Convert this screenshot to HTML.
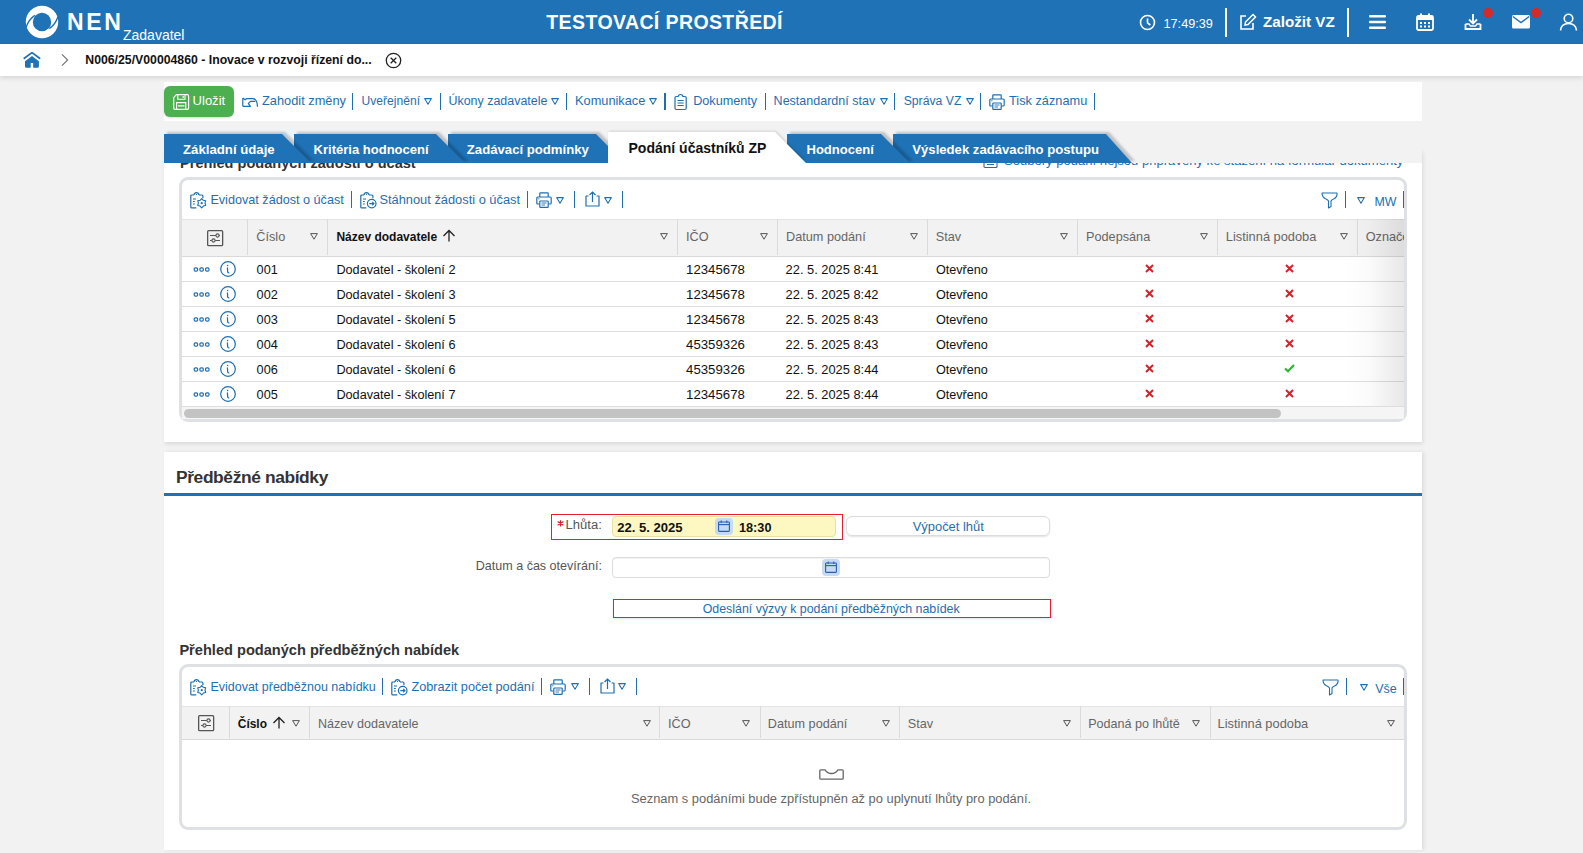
<!DOCTYPE html><html><head><meta charset="utf-8"><style>
html,body{margin:0;padding:0}
body{width:1583px;height:853px;overflow:hidden;position:relative;background:#f2f2f2;font-family:"Liberation Sans",sans-serif}
.t{position:absolute;line-height:1;white-space:nowrap}
svg{overflow:visible}
</style></head><body>
<div style="position:absolute;left:0px;top:0px;width:1583px;height:44px;background:#1f72b5"></div>
<svg style="position:absolute;left:25px;top:5px;" width="34" height="34" viewBox="0 0 34 34"><circle cx="17" cy="17" r="16.2" fill="#fff"/><circle cx="17" cy="17" r="9.2" fill="#1f72b5"/>
<path d="M9.8 10.3 Q3.5 14.5 1 22.5" stroke="#1f72b5" stroke-width="1.4" fill="none"/>
<path d="M24.2 23.7 Q30.5 19.5 33 11.5" stroke="#1f72b5" stroke-width="1.4" fill="none"/></svg>
<div class="t" style="left:67px;top:11.00px;font-size:23px;font-weight:700;color:#fff;letter-spacing:2.6px">NEN</div>
<div class="t" style="left:123px;top:28.00px;font-size:14px;font-weight:400;color:#fff;">Zadavatel</div>
<div class="t" style="left:546.3px;top:13.00px;font-size:19.5px;font-weight:700;color:#fff;letter-spacing:0.4px">TESTOVACÍ PROSTŘEDÍ</div>
<svg style="position:absolute;left:1139px;top:14px;" width="17" height="17" viewBox="0 0 17 17"><circle cx="8.5" cy="8.5" r="7" fill="none" stroke="#fff" stroke-width="1.6"/><path d="M8.5 4.5 V8.8 L11.3 11" fill="none" stroke="#fff" stroke-width="1.6"/></svg>
<div class="t" style="left:1163.5px;top:18.00px;font-size:12.7px;font-weight:400;color:#fff;">17:49:39</div>
<div style="position:absolute;left:1225.3px;top:8px;width:2.2px;height:29px;background:#fff"></div>
<svg style="position:absolute;left:1238px;top:13px;" width="19" height="18" viewBox="0 0 19 18"><path d="M8 3 H3 V16 H15 V10" fill="none" stroke="#fff" stroke-width="1.6"/><path d="M7 12 L7.5 9 L15 1.5 L17.5 4 L10 11.5 Z" fill="none" stroke="#fff" stroke-width="1.5"/></svg>
<div class="t" style="left:1263px;top:14.00px;font-size:15.2px;font-weight:700;color:#fff;">Založit VZ</div>
<div style="position:absolute;left:1346.8px;top:8px;width:2.2px;height:29px;background:#fff"></div>
<svg style="position:absolute;left:1369px;top:14px;" width="17" height="16" viewBox="0 0 17 16"><rect x="0" y="1" width="17" height="2.6" rx="1" fill="#fff"/><rect x="0" y="6.7" width="17" height="2.6" rx="1" fill="#fff"/><rect x="0" y="12.4" width="17" height="2.6" rx="1" fill="#fff"/></svg>
<svg style="position:absolute;left:1416px;top:13px;" width="18" height="18" viewBox="0 0 18 18"><rect x="1" y="3" width="16" height="14" rx="1.5" fill="none" stroke="#fff" stroke-width="1.8"/><rect x="1" y="3" width="16" height="4" fill="#fff"/><rect x="4" y="0.5" width="2" height="4" fill="#fff"/><rect x="12" y="0.5" width="2" height="4" fill="#fff"/><g fill="#fff"><rect x="4" y="9" width="2" height="2"/><rect x="8" y="9" width="2" height="2"/><rect x="12" y="9" width="2" height="2"/><rect x="4" y="12.5" width="2" height="2"/><rect x="8" y="12.5" width="2" height="2"/><rect x="12" y="12.5" width="2" height="2"/></g></svg>
<svg style="position:absolute;left:1464px;top:13px;" width="18" height="18" viewBox="0 0 18 18"><path d="M9 1 V10 M5 6.5 L9 10.5 L13 6.5" fill="none" stroke="#fff" stroke-width="1.8"/><path d="M1.5 11 V16 H16.5 V11" fill="none" stroke="#fff" stroke-width="1.8"/><path d="M1.5 11 H5 L6.5 13 H11.5 L13 11 H16.5" fill="none" stroke="#fff" stroke-width="1.4"/></svg>
<div style="position:absolute;left:1482.5px;top:7.8px;width:10px;height:10px;border-radius:50%;background:#d32a2a"></div>
<svg style="position:absolute;left:1512px;top:15px;" width="18" height="14" viewBox="0 0 18 14"><rect x="0" y="0" width="18" height="13.5" rx="1.5" fill="#fff"/><path d="M0.8 1.5 L9 7.5 L17.2 1.5" fill="none" stroke="#1f72b5" stroke-width="1.5"/></svg>
<div style="position:absolute;left:1530.8px;top:7.8px;width:10px;height:10px;border-radius:50%;background:#d32a2a"></div>
<svg style="position:absolute;left:1559px;top:13px;" width="19" height="18" viewBox="0 0 19 18"><circle cx="9.5" cy="5.5" r="4.3" fill="none" stroke="#fff" stroke-width="1.6"/><path d="M1.5 17.5 C2 12 5 10.5 9.5 10.5 C14 10.5 17 12 17.5 17.5" fill="none" stroke="#fff" stroke-width="1.6"/></svg>
<div style="position:absolute;left:0px;top:44px;width:1583px;height:32px;background:#fff;box-shadow:0 2px 5px rgba(0,0,0,0.12)"></div>
<svg style="position:absolute;left:23px;top:51px;" width="18" height="18" viewBox="0 0 18 18"><path d="M1.3 7.3 L9 1.6 L16.6 7.3" fill="none" stroke="#1f72b5" stroke-width="1.8" stroke-linejoin="round" stroke-linecap="round"/><path d="M2 10.2 L9 5.1 L15.9 10.2 V15.4 Q15.9 16.8 14.5 16.8 H10.2 V12 H7.7 V16.8 H3.4 Q2 16.8 2 15.4 Z" fill="#1f72b5"/></svg>
<svg style="position:absolute;left:60px;top:53px;" width="9" height="14" viewBox="0 0 9 14"><path d="M2 1.3 L7.6 7 L2 12.7" fill="none" stroke="#777" stroke-width="1.2"/></svg>
<div class="t" style="left:85.3px;top:54.00px;font-size:12.285368155441178px;font-weight:700;color:#111;">N006/25/V00004860 - Inovace v rozvoji řízení do...</div>
<svg style="position:absolute;left:385px;top:52px;" width="17" height="17" viewBox="0 0 17 17"><circle cx="8.5" cy="8.5" r="7.2" fill="none" stroke="#222" stroke-width="1.3"/><path d="M5.7 5.7 L11.3 11.3 M11.3 5.7 L5.7 11.3" stroke="#222" stroke-width="1.3"/></svg>
<div style="position:absolute;left:164px;top:82px;width:1258px;height:39px;background:#fff;box-shadow:0 1px 0 #e2e2e2"></div>
<div style="position:absolute;left:164px;top:86px;width:70px;height:31px;background:#4caf50;border-radius:6px;box-shadow:0 1px 2px rgba(0,0,0,0.15)"></div>
<svg style="position:absolute;left:172.5px;top:94px;" width="17" height="16" viewBox="0 0 17 16"><path d="M3.3 0.7 H14.3 Q15.6 0.7 15.6 2 V14 Q15.6 15.3 14.3 15.3 H2 Q0.7 15.3 0.7 14 V3.6 Z" fill="none" stroke="#fff" stroke-width="1.2" stroke-linejoin="round"/><path d="M4.8 0.9 V5.2 H12 V0.9" fill="none" stroke="#fff" stroke-width="1.1"/><rect x="9.6" y="2" width="1.2" height="1.9" fill="#fff"/><path d="M3.6 15.2 V8.6 H12.8 V15.2 M5 11.9 H11.4" fill="none" stroke="#fff" stroke-width="1.1"/></svg>
<div class="t" style="left:192.6px;top:94.00px;font-size:13.036740814796302px;font-weight:400;color:#fff;">Uložit</div>
<svg style="position:absolute;left:241px;top:96px;" width="18" height="12" viewBox="0 0 18 12"><path d="M1.8 10.3 V2.8 Q1.8 2.2 2.4 2.3 L3.6 3.4 Q4.5 3.9 5.4 2.6 H11.5 C14.6 2.5 16.5 5.6 16.5 10.7" fill="none" stroke="#1f6eb0" stroke-width="1.2" stroke-linejoin="round"/><path d="M1.8 10.3 H9.4 L7.3 7.4 L9.8 5.3 H14.3" fill="none" stroke="#1f6eb0" stroke-width="1.2" stroke-linejoin="round"/></svg>
<div class="t" style="left:262px;top:95.00px;font-size:12.80762358546754px;font-weight:400;color:#1f6eb0;">Zahodit změny</div>
<div style="position:absolute;left:352px;top:93px;width:1.25px;height:17px;background:#1f6eb0"></div>
<div class="t" style="left:361.6px;top:95.00px;font-size:12.096930533117932px;font-weight:400;color:#1f6eb0;">Uveřejnění</div>
<svg style="position:absolute;left:424.3px;top:97.6px;" width="8" height="7" viewBox="0 0 8 7"><path d="M0.6 0.6 H7.4 L4 6.2 Z" fill="none" stroke="#1f6eb0" stroke-width="1.05" stroke-linejoin="round"/></svg>
<div style="position:absolute;left:439.5px;top:93px;width:1.25px;height:17px;background:#1f6eb0"></div>
<div class="t" style="left:448.5px;top:95.00px;font-size:12.454054054054055px;font-weight:400;color:#1f6eb0;">Úkony zadavatele</div>
<svg style="position:absolute;left:551px;top:97.6px;" width="8" height="7" viewBox="0 0 8 7"><path d="M0.6 0.6 H7.4 L4 6.2 Z" fill="none" stroke="#1f6eb0" stroke-width="1.05" stroke-linejoin="round"/></svg>
<div style="position:absolute;left:565.8px;top:93px;width:1.25px;height:17px;background:#1f6eb0"></div>
<div class="t" style="left:575px;top:95.00px;font-size:12.793094636417845px;font-weight:400;color:#1f6eb0;">Komunikace</div>
<svg style="position:absolute;left:649.1px;top:97.6px;" width="8" height="7" viewBox="0 0 8 7"><path d="M0.6 0.6 H7.4 L4 6.2 Z" fill="none" stroke="#1f6eb0" stroke-width="1.05" stroke-linejoin="round"/></svg>
<div style="position:absolute;left:664.3px;top:93px;width:1.25px;height:17px;background:#1f6eb0"></div>
<svg style="position:absolute;left:674px;top:94px;" width="13" height="16" viewBox="0 0 13 16"><path d="M4 2.5 H2.2 Q1 2.5 1 3.7 V14.3 Q1 15.5 2.2 15.5 H11 Q12.2 15.5 12.2 14.3 V3.7 Q12.2 2.5 11 2.5 H9 Q8.5 0.5 6.6 0.5 Q4.7 0.5 4 2.5 Z" fill="none" stroke="#1f6eb0" stroke-width="1.2"/><path d="M3.5 6.5 H9.7 M3.5 9 H9.7 M3.5 11.5 H9.7" stroke="#1f6eb0" stroke-width="1.1"/></svg>
<div class="t" style="left:693.2px;top:95.00px;font-size:12.654082609904538px;font-weight:400;color:#1f6eb0;">Dokumenty</div>
<div style="position:absolute;left:764.5px;top:93px;width:1.25px;height:17px;background:#1f6eb0"></div>
<div class="t" style="left:773.6px;top:95.00px;font-size:12.531141102404652px;font-weight:400;color:#1f6eb0;">Nestandardní stav</div>
<svg style="position:absolute;left:879.8px;top:97.6px;" width="8" height="7" viewBox="0 0 8 7"><path d="M0.6 0.6 H7.4 L4 6.2 Z" fill="none" stroke="#1f6eb0" stroke-width="1.05" stroke-linejoin="round"/></svg>
<div style="position:absolute;left:893.9px;top:93px;width:1.25px;height:17px;background:#1f6eb0"></div>
<div class="t" style="left:903.7px;top:95.00px;font-size:12.213659665950058px;font-weight:400;color:#1f6eb0;">Správa VZ</div>
<svg style="position:absolute;left:965.5px;top:97.6px;" width="8" height="7" viewBox="0 0 8 7"><path d="M0.6 0.6 H7.4 L4 6.2 Z" fill="none" stroke="#1f6eb0" stroke-width="1.05" stroke-linejoin="round"/></svg>
<div style="position:absolute;left:979.8px;top:93px;width:1.25px;height:17px;background:#1f6eb0"></div>
<svg style="position:absolute;left:989px;top:94px;" width="16" height="16" viewBox="0 0 16 16"><path d="M3.8 5 V1.5 Q3.8 0.8 4.5 0.8 H11.5 Q12.2 0.8 12.2 1.5 V5" fill="none" stroke="#1f6eb0" stroke-width="1.2"/><path d="M3.5 12 H1.8 Q0.8 12 0.8 11 V6 Q0.8 5 1.8 5 H14.2 Q15.2 5 15.2 6 V11 Q15.2 12 14.2 12 H12.5" fill="none" stroke="#1f6eb0" stroke-width="1.2"/><rect x="3.8" y="9" width="8.4" height="6.3" rx="0.6" fill="none" stroke="#1f6eb0" stroke-width="1.2"/><path d="M5.5 11 H10.5 M5.5 13 H9" stroke="#1f6eb0" stroke-width="0.9"/><path d="M2.2 6.8 H3.5" stroke="#1f6eb0" stroke-width="0.9"/></svg>
<div class="t" style="left:1009px;top:95.00px;font-size:12.770316760531077px;font-weight:400;color:#1f6eb0;">Tisk záznamu</div>
<div style="position:absolute;left:1094px;top:93px;width:1.25px;height:17px;background:#1f6eb0"></div>
<div style="position:absolute;left:164px;top:150px;width:1258px;height:292px;background:#fff;box-shadow:1px 2px 4px rgba(0,0,0,0.10)"></div>
<div class="t" style="left:180px;top:156.00px;font-size:14.594928880643167px;font-weight:700;color:#333;">Přehled podaných žádostí o účast</div>
<svg style="position:absolute;left:983px;top:156px;" width="15" height="12" viewBox="0 0 15 12"><rect x="1" y="1" width="13" height="10.5" rx="1" fill="none" stroke="#1f6eb0" stroke-width="1.1"/><path d="M4 8.5 H11" stroke="#1f6eb0" stroke-width="1"/></svg>
<div class="t" style="left:1004px;top:154.00px;font-size:13.070235959707466px;font-weight:400;color:#1f6eb0;">Soubory podání nejsou připraveny ke stažení na formulář dokumenty</div>
<div style="position:absolute;left:179px;top:177px;width:1228px;height:245px;box-sizing:border-box;border:3px solid #dfe0e3;border-radius:9px;background:#fff"></div>
<svg style="position:absolute;left:190px;top:191.5px;" width="17" height="17" viewBox="0 0 17 17"><path d="M4 3 H1.8 Q0.8 3 0.8 4 V14.9 Q0.8 15.9 1.8 15.9 H6.3" fill="none" stroke="#1f6eb0" stroke-width="1.2"/><path d="M9 3 H11.9 Q12.9 3 12.9 4 V6.3" fill="none" stroke="#1f6eb0" stroke-width="1.2"/><path d="M4 3 Q4.3 0.7 6.45 0.7 Q8.6 0.7 9 3" fill="none" stroke="#1f6eb0" stroke-width="1.2"/><circle cx="6.45" cy="2.4" r="0.6" fill="#1f6eb0"/><path d="M3 7 H6 M3 9.5 H4.8 M3 12 H4.8" stroke="#1f6eb0" stroke-width="1.1"/><polygon points="11.70,6.60 13.35,8.34 15.68,8.90 15.00,11.20 15.68,13.50 13.35,14.06 11.70,15.80 10.05,14.06 7.72,13.50 8.40,11.20 7.72,8.90 10.05,8.34" fill="#fff" stroke="#1f6eb0" stroke-width="1.1" stroke-linejoin="round"/><circle cx="11.7" cy="11.2" r="1.1" fill="#1f6eb0"/></svg>
<div class="t" style="left:210.4px;top:194.00px;font-size:12.630706867473444px;font-weight:400;color:#1f6eb0;">Evidovat žádost o účast</div>
<div style="position:absolute;left:351px;top:191px;width:1.25px;height:17px;background:#1f6eb0"></div>
<svg style="position:absolute;left:359.8px;top:191.5px;" width="17" height="17" viewBox="0 0 17 17"><path d="M4 3 H1.8 Q0.8 3 0.8 4 V14.9 Q0.8 15.9 1.8 15.9 H6.3" fill="none" stroke="#1f6eb0" stroke-width="1.2"/><path d="M9 3 H11.9 Q12.9 3 12.9 4 V6.3" fill="none" stroke="#1f6eb0" stroke-width="1.2"/><path d="M4 3 Q4.3 0.7 6.45 0.7 Q8.6 0.7 9 3" fill="none" stroke="#1f6eb0" stroke-width="1.2"/><circle cx="6.45" cy="2.4" r="0.6" fill="#1f6eb0"/><path d="M3 7 H6 M3 9.5 H4.8 M3 12 H4.8" stroke="#1f6eb0" stroke-width="1.1"/><circle cx="11.7" cy="11.6" r="4.3" fill="#fff" stroke="#1f6eb0" stroke-width="1.2"/><path d="M9.3 11.6 H14 M12.2 9.8 L14 11.6 L12.2 13.4" fill="none" stroke="#1f6eb0" stroke-width="1.1"/></svg>
<div class="t" style="left:379.4px;top:194.00px;font-size:12.856429498794427px;font-weight:400;color:#1f6eb0;">Stáhnout žádosti o účast</div>
<div style="position:absolute;left:527px;top:191px;width:1.25px;height:17px;background:#1f6eb0"></div>
<svg style="position:absolute;left:535.5px;top:192px;" width="16" height="16" viewBox="0 0 16 16"><path d="M3.8 5 V1.5 Q3.8 0.8 4.5 0.8 H11.5 Q12.2 0.8 12.2 1.5 V5" fill="none" stroke="#1f6eb0" stroke-width="1.2"/><path d="M3.5 12 H1.8 Q0.8 12 0.8 11 V6 Q0.8 5 1.8 5 H14.2 Q15.2 5 15.2 6 V11 Q15.2 12 14.2 12 H12.5" fill="none" stroke="#1f6eb0" stroke-width="1.2"/><rect x="3.8" y="9" width="8.4" height="6.3" rx="0.6" fill="none" stroke="#1f6eb0" stroke-width="1.2"/><path d="M5.5 11 H10.5 M5.5 13 H9" stroke="#1f6eb0" stroke-width="0.9"/><path d="M2.2 6.8 H3.5" stroke="#1f6eb0" stroke-width="0.9"/></svg>
<svg style="position:absolute;left:555.7px;top:197px;" width="8" height="7" viewBox="0 0 8 7"><path d="M0.6 0.6 H7.4 L4 6.2 Z" fill="none" stroke="#1f6eb0" stroke-width="1.05" stroke-linejoin="round"/></svg>
<div style="position:absolute;left:574px;top:191px;width:1.25px;height:17px;background:#1f6eb0"></div>
<svg style="position:absolute;left:585px;top:191px;" width="15" height="16" viewBox="0 0 15 16"><path d="M3.5 5 H1 V15 H14 V5 H11.5" fill="none" stroke="#1f6eb0" stroke-width="1.2" stroke-linejoin="round"/><path d="M7.5 11 V1 M4.5 4 L7.5 1 L10.5 4" fill="none" stroke="#1f6eb0" stroke-width="1.2"/></svg>
<svg style="position:absolute;left:603.6px;top:197px;" width="8" height="7" viewBox="0 0 8 7"><path d="M0.6 0.6 H7.4 L4 6.2 Z" fill="none" stroke="#1f6eb0" stroke-width="1.05" stroke-linejoin="round"/></svg>
<div style="position:absolute;left:622px;top:191px;width:1.25px;height:17px;background:#1f6eb0"></div>
<svg style="position:absolute;left:1321px;top:191.5px;" width="17" height="17" viewBox="0 0 17 17"><path d="M1 1 H16 Q16.5 5 13 6.8 Q10.5 8 10 9 V14.5 L7.5 16 V9 Q7 8 4.5 6.8 Q1 5 1 1 Z" fill="none" stroke="#1f6eb0" stroke-width="1.1" stroke-linejoin="round"/></svg>
<div style="position:absolute;left:1345px;top:191px;width:1.25px;height:17px;background:#1f6eb0"></div>
<svg style="position:absolute;left:1357.3px;top:197px;" width="8" height="7" viewBox="0 0 8 7"><path d="M0.6 0.6 H7.4 L4 6.2 Z" fill="none" stroke="#1f6eb0" stroke-width="1.05" stroke-linejoin="round"/></svg>
<div class="t" style="left:1374.4px;top:196.00px;font-size:12.381287372493844px;font-weight:400;color:#1f6eb0;">MW</div>
<div style="position:absolute;left:1403px;top:191px;width:1.25px;height:17px;background:#1f6eb0"></div>
<div style="position:absolute;left:182px;top:219px;width:1222px;height:38px;background:#f2f2f2;border-top:1px solid #e4e4e4;border-bottom:1.5px solid #d9d9d9;box-sizing:border-box"></div>
<svg style="position:absolute;left:206.5px;top:230px;" width="17" height="17" viewBox="0 0 17 17"><rect x="0.65" y="0.65" width="15" height="15" rx="1" fill="none" stroke="#555" stroke-width="1.3"/><path d="M3 5.5 H13 M3 10.5 H13" stroke="#555" stroke-width="1.1"/><circle cx="10.5" cy="5.5" r="1.6" fill="#f0f0f0" stroke="#555" stroke-width="1.1"/><circle cx="6.5" cy="10.5" r="1.6" fill="#f0f0f0" stroke="#555" stroke-width="1.1"/></svg>
<div style="position:absolute;left:247px;top:219px;width:1px;height:36px;background:#dadada"></div>
<div style="position:absolute;left:327px;top:219px;width:1px;height:36px;background:#dadada"></div>
<div style="position:absolute;left:677px;top:219px;width:1px;height:36px;background:#dadada"></div>
<div style="position:absolute;left:777px;top:219px;width:1px;height:36px;background:#dadada"></div>
<div style="position:absolute;left:927px;top:219px;width:1px;height:36px;background:#dadada"></div>
<div style="position:absolute;left:1077px;top:219px;width:1px;height:36px;background:#dadada"></div>
<div style="position:absolute;left:1217px;top:219px;width:1px;height:36px;background:#dadada"></div>
<div style="position:absolute;left:1357px;top:219px;width:1px;height:36px;background:#dadada"></div>
<div class="t" style="left:256.3px;top:231.00px;font-size:12.7px;font-weight:400;color:#666;">Číslo</div>
<svg style="position:absolute;left:310px;top:233px;" width="8" height="7" viewBox="0 0 8 7"><path d="M0.6 0.6 H7.4 L4 6.2 Z" fill="none" stroke="#555" stroke-width="1.0" stroke-linejoin="round"/></svg>
<div class="t" style="left:336.4px;top:231.00px;font-size:12.010500251335804px;font-weight:700;color:#111;">Název dodavatele</div>
<svg style="position:absolute;left:442px;top:229px;" width="14" height="13" viewBox="0 0 14 13"><path d="M7 12.5 V1.5 M1.5 7 L7 1.5 L12.5 7" fill="none" stroke="#222" stroke-width="1.3"/></svg>
<svg style="position:absolute;left:660px;top:233px;" width="8" height="7" viewBox="0 0 8 7"><path d="M0.6 0.6 H7.4 L4 6.2 Z" fill="none" stroke="#555" stroke-width="1.0" stroke-linejoin="round"/></svg>
<div class="t" style="left:686px;top:231.00px;font-size:12.7px;font-weight:400;color:#666;">IČO</div>
<svg style="position:absolute;left:760px;top:233px;" width="8" height="7" viewBox="0 0 8 7"><path d="M0.6 0.6 H7.4 L4 6.2 Z" fill="none" stroke="#555" stroke-width="1.0" stroke-linejoin="round"/></svg>
<div class="t" style="left:786px;top:231.00px;font-size:12.7px;font-weight:400;color:#666;">Datum podání</div>
<svg style="position:absolute;left:910px;top:233px;" width="8" height="7" viewBox="0 0 8 7"><path d="M0.6 0.6 H7.4 L4 6.2 Z" fill="none" stroke="#555" stroke-width="1.0" stroke-linejoin="round"/></svg>
<div class="t" style="left:935.8px;top:231.00px;font-size:12.7px;font-weight:400;color:#666;">Stav</div>
<svg style="position:absolute;left:1060px;top:233px;" width="8" height="7" viewBox="0 0 8 7"><path d="M0.6 0.6 H7.4 L4 6.2 Z" fill="none" stroke="#555" stroke-width="1.0" stroke-linejoin="round"/></svg>
<div class="t" style="left:1086px;top:231.00px;font-size:12.7px;font-weight:400;color:#666;">Podepsána</div>
<svg style="position:absolute;left:1200px;top:233px;" width="8" height="7" viewBox="0 0 8 7"><path d="M0.6 0.6 H7.4 L4 6.2 Z" fill="none" stroke="#555" stroke-width="1.0" stroke-linejoin="round"/></svg>
<div class="t" style="left:1225.8px;top:231.00px;font-size:12.830021684294376px;font-weight:400;color:#666;">Listinná podoba</div>
<svg style="position:absolute;left:1340px;top:233px;" width="8" height="7" viewBox="0 0 8 7"><path d="M0.6 0.6 H7.4 L4 6.2 Z" fill="none" stroke="#555" stroke-width="1.0" stroke-linejoin="round"/></svg>
<div class="t" style="left:1365.7px;top:231.00px;font-size:12.7px;font-weight:400;color:#666;width:38.5px;overflow:hidden">Označení</div>
<div style="position:absolute;left:182px;top:281px;width:1222px;height:1px;background:#dedede"></div>
<svg style="position:absolute;left:193.3px;top:266.8px;" width="17" height="5" viewBox="0 0 17 5"><rect x="1.2" y="0.8" width="3.4" height="3.4" rx="1.2" fill="none" stroke="#1f6eb0" stroke-width="1.2"/><rect x="6.9" y="0.8" width="3.4" height="3.4" rx="1.2" fill="none" stroke="#1f6eb0" stroke-width="1.2"/><rect x="12.6" y="0.8" width="3.4" height="3.4" rx="1.2" fill="none" stroke="#1f6eb0" stroke-width="1.2"/></svg>
<svg style="position:absolute;left:220px;top:261px;" width="16" height="16" viewBox="0 0 16 16"><circle cx="8" cy="8" r="7.3" fill="none" stroke="#1f6eb0" stroke-width="1.2"/><circle cx="7.6" cy="4.6" r="0.75" fill="#1f6eb0"/><path d="M7.4 6.9 Q7.7 9 7.6 10.6 Q7.7 11.8 8.9 12" fill="none" stroke="#1f6eb0" stroke-width="1.2" stroke-linecap="round"/></svg>
<div class="t" style="left:256.6px;top:264.00px;font-size:12.7px;font-weight:400;color:#111;">001</div>
<div class="t" style="left:336.4px;top:264.00px;font-size:12.688865972522537px;font-weight:400;color:#111;">Dodavatel - školení 2</div>
<div class="t" style="left:686.1px;top:263.00px;font-size:13.215803336259878px;font-weight:400;color:#111;">12345678</div>
<div class="t" style="left:785.6px;top:264.00px;font-size:12.851738970667704px;font-weight:400;color:#111;">22. 5. 2025 8:41</div>
<div class="t" style="left:935.9px;top:264.00px;font-size:12.641975308641975px;font-weight:400;color:#111;">Otevřeno</div>
<svg style="position:absolute;left:1144.5px;top:264px;" width="9" height="9" viewBox="0 0 9 9"><path d="M1 1 L8 8 M8 1 L1 8" stroke="#d2232a" stroke-width="2"/></svg>
<svg style="position:absolute;left:1284.5px;top:264px;" width="9" height="9" viewBox="0 0 9 9"><path d="M1 1 L8 8 M8 1 L1 8" stroke="#d2232a" stroke-width="2"/></svg>
<div style="position:absolute;left:182px;top:306px;width:1222px;height:1px;background:#dedede"></div>
<svg style="position:absolute;left:193.3px;top:291.8px;" width="17" height="5" viewBox="0 0 17 5"><rect x="1.2" y="0.8" width="3.4" height="3.4" rx="1.2" fill="none" stroke="#1f6eb0" stroke-width="1.2"/><rect x="6.9" y="0.8" width="3.4" height="3.4" rx="1.2" fill="none" stroke="#1f6eb0" stroke-width="1.2"/><rect x="12.6" y="0.8" width="3.4" height="3.4" rx="1.2" fill="none" stroke="#1f6eb0" stroke-width="1.2"/></svg>
<svg style="position:absolute;left:220px;top:286px;" width="16" height="16" viewBox="0 0 16 16"><circle cx="8" cy="8" r="7.3" fill="none" stroke="#1f6eb0" stroke-width="1.2"/><circle cx="7.6" cy="4.6" r="0.75" fill="#1f6eb0"/><path d="M7.4 6.9 Q7.7 9 7.6 10.6 Q7.7 11.8 8.9 12" fill="none" stroke="#1f6eb0" stroke-width="1.2" stroke-linecap="round"/></svg>
<div class="t" style="left:256.6px;top:289.00px;font-size:12.7px;font-weight:400;color:#111;">002</div>
<div class="t" style="left:336.4px;top:289.00px;font-size:12.688865972522537px;font-weight:400;color:#111;">Dodavatel - školení 3</div>
<div class="t" style="left:686.1px;top:288.00px;font-size:13.215803336259878px;font-weight:400;color:#111;">12345678</div>
<div class="t" style="left:785.6px;top:289.00px;font-size:12.851738970667704px;font-weight:400;color:#111;">22. 5. 2025 8:42</div>
<div class="t" style="left:935.9px;top:289.00px;font-size:12.641975308641975px;font-weight:400;color:#111;">Otevřeno</div>
<svg style="position:absolute;left:1144.5px;top:289px;" width="9" height="9" viewBox="0 0 9 9"><path d="M1 1 L8 8 M8 1 L1 8" stroke="#d2232a" stroke-width="2"/></svg>
<svg style="position:absolute;left:1284.5px;top:289px;" width="9" height="9" viewBox="0 0 9 9"><path d="M1 1 L8 8 M8 1 L1 8" stroke="#d2232a" stroke-width="2"/></svg>
<div style="position:absolute;left:182px;top:331px;width:1222px;height:1px;background:#dedede"></div>
<svg style="position:absolute;left:193.3px;top:316.8px;" width="17" height="5" viewBox="0 0 17 5"><rect x="1.2" y="0.8" width="3.4" height="3.4" rx="1.2" fill="none" stroke="#1f6eb0" stroke-width="1.2"/><rect x="6.9" y="0.8" width="3.4" height="3.4" rx="1.2" fill="none" stroke="#1f6eb0" stroke-width="1.2"/><rect x="12.6" y="0.8" width="3.4" height="3.4" rx="1.2" fill="none" stroke="#1f6eb0" stroke-width="1.2"/></svg>
<svg style="position:absolute;left:220px;top:311px;" width="16" height="16" viewBox="0 0 16 16"><circle cx="8" cy="8" r="7.3" fill="none" stroke="#1f6eb0" stroke-width="1.2"/><circle cx="7.6" cy="4.6" r="0.75" fill="#1f6eb0"/><path d="M7.4 6.9 Q7.7 9 7.6 10.6 Q7.7 11.8 8.9 12" fill="none" stroke="#1f6eb0" stroke-width="1.2" stroke-linecap="round"/></svg>
<div class="t" style="left:256.6px;top:314.00px;font-size:12.7px;font-weight:400;color:#111;">003</div>
<div class="t" style="left:336.4px;top:314.00px;font-size:12.688865972522537px;font-weight:400;color:#111;">Dodavatel - školení 5</div>
<div class="t" style="left:686.1px;top:313.00px;font-size:13.215803336259878px;font-weight:400;color:#111;">12345678</div>
<div class="t" style="left:785.6px;top:314.00px;font-size:12.851738970667704px;font-weight:400;color:#111;">22. 5. 2025 8:43</div>
<div class="t" style="left:935.9px;top:314.00px;font-size:12.641975308641975px;font-weight:400;color:#111;">Otevřeno</div>
<svg style="position:absolute;left:1144.5px;top:314px;" width="9" height="9" viewBox="0 0 9 9"><path d="M1 1 L8 8 M8 1 L1 8" stroke="#d2232a" stroke-width="2"/></svg>
<svg style="position:absolute;left:1284.5px;top:314px;" width="9" height="9" viewBox="0 0 9 9"><path d="M1 1 L8 8 M8 1 L1 8" stroke="#d2232a" stroke-width="2"/></svg>
<div style="position:absolute;left:182px;top:356px;width:1222px;height:1px;background:#dedede"></div>
<svg style="position:absolute;left:193.3px;top:341.8px;" width="17" height="5" viewBox="0 0 17 5"><rect x="1.2" y="0.8" width="3.4" height="3.4" rx="1.2" fill="none" stroke="#1f6eb0" stroke-width="1.2"/><rect x="6.9" y="0.8" width="3.4" height="3.4" rx="1.2" fill="none" stroke="#1f6eb0" stroke-width="1.2"/><rect x="12.6" y="0.8" width="3.4" height="3.4" rx="1.2" fill="none" stroke="#1f6eb0" stroke-width="1.2"/></svg>
<svg style="position:absolute;left:220px;top:336px;" width="16" height="16" viewBox="0 0 16 16"><circle cx="8" cy="8" r="7.3" fill="none" stroke="#1f6eb0" stroke-width="1.2"/><circle cx="7.6" cy="4.6" r="0.75" fill="#1f6eb0"/><path d="M7.4 6.9 Q7.7 9 7.6 10.6 Q7.7 11.8 8.9 12" fill="none" stroke="#1f6eb0" stroke-width="1.2" stroke-linecap="round"/></svg>
<div class="t" style="left:256.6px;top:339.00px;font-size:12.7px;font-weight:400;color:#111;">004</div>
<div class="t" style="left:336.4px;top:339.00px;font-size:12.688865972522537px;font-weight:400;color:#111;">Dodavatel - školení 6</div>
<div class="t" style="left:686.1px;top:338.00px;font-size:13.215803336259878px;font-weight:400;color:#111;">45359326</div>
<div class="t" style="left:785.6px;top:339.00px;font-size:12.851738970667704px;font-weight:400;color:#111;">22. 5. 2025 8:43</div>
<div class="t" style="left:935.9px;top:339.00px;font-size:12.641975308641975px;font-weight:400;color:#111;">Otevřeno</div>
<svg style="position:absolute;left:1144.5px;top:339px;" width="9" height="9" viewBox="0 0 9 9"><path d="M1 1 L8 8 M8 1 L1 8" stroke="#d2232a" stroke-width="2"/></svg>
<svg style="position:absolute;left:1284.5px;top:339px;" width="9" height="9" viewBox="0 0 9 9"><path d="M1 1 L8 8 M8 1 L1 8" stroke="#d2232a" stroke-width="2"/></svg>
<div style="position:absolute;left:182px;top:381px;width:1222px;height:1px;background:#dedede"></div>
<svg style="position:absolute;left:193.3px;top:366.8px;" width="17" height="5" viewBox="0 0 17 5"><rect x="1.2" y="0.8" width="3.4" height="3.4" rx="1.2" fill="none" stroke="#1f6eb0" stroke-width="1.2"/><rect x="6.9" y="0.8" width="3.4" height="3.4" rx="1.2" fill="none" stroke="#1f6eb0" stroke-width="1.2"/><rect x="12.6" y="0.8" width="3.4" height="3.4" rx="1.2" fill="none" stroke="#1f6eb0" stroke-width="1.2"/></svg>
<svg style="position:absolute;left:220px;top:361px;" width="16" height="16" viewBox="0 0 16 16"><circle cx="8" cy="8" r="7.3" fill="none" stroke="#1f6eb0" stroke-width="1.2"/><circle cx="7.6" cy="4.6" r="0.75" fill="#1f6eb0"/><path d="M7.4 6.9 Q7.7 9 7.6 10.6 Q7.7 11.8 8.9 12" fill="none" stroke="#1f6eb0" stroke-width="1.2" stroke-linecap="round"/></svg>
<div class="t" style="left:256.6px;top:364.00px;font-size:12.7px;font-weight:400;color:#111;">006</div>
<div class="t" style="left:336.4px;top:364.00px;font-size:12.688865972522537px;font-weight:400;color:#111;">Dodavatel - školení 6</div>
<div class="t" style="left:686.1px;top:363.00px;font-size:13.215803336259878px;font-weight:400;color:#111;">45359326</div>
<div class="t" style="left:785.6px;top:364.00px;font-size:12.851738970667704px;font-weight:400;color:#111;">22. 5. 2025 8:44</div>
<div class="t" style="left:935.9px;top:364.00px;font-size:12.641975308641975px;font-weight:400;color:#111;">Otevřeno</div>
<svg style="position:absolute;left:1144.5px;top:364px;" width="9" height="9" viewBox="0 0 9 9"><path d="M1 1 L8 8 M8 1 L1 8" stroke="#d2232a" stroke-width="2"/></svg>
<svg style="position:absolute;left:1283.5px;top:364px;" width="11" height="9" viewBox="0 0 11 9"><path d="M1 4.5 L4 7.2 L10 1" fill="none" stroke="#2fb534" stroke-width="2.2"/></svg>
<div style="position:absolute;left:182px;top:406px;width:1222px;height:1px;background:#dedede"></div>
<svg style="position:absolute;left:193.3px;top:391.8px;" width="17" height="5" viewBox="0 0 17 5"><rect x="1.2" y="0.8" width="3.4" height="3.4" rx="1.2" fill="none" stroke="#1f6eb0" stroke-width="1.2"/><rect x="6.9" y="0.8" width="3.4" height="3.4" rx="1.2" fill="none" stroke="#1f6eb0" stroke-width="1.2"/><rect x="12.6" y="0.8" width="3.4" height="3.4" rx="1.2" fill="none" stroke="#1f6eb0" stroke-width="1.2"/></svg>
<svg style="position:absolute;left:220px;top:386px;" width="16" height="16" viewBox="0 0 16 16"><circle cx="8" cy="8" r="7.3" fill="none" stroke="#1f6eb0" stroke-width="1.2"/><circle cx="7.6" cy="4.6" r="0.75" fill="#1f6eb0"/><path d="M7.4 6.9 Q7.7 9 7.6 10.6 Q7.7 11.8 8.9 12" fill="none" stroke="#1f6eb0" stroke-width="1.2" stroke-linecap="round"/></svg>
<div class="t" style="left:256.6px;top:389.00px;font-size:12.7px;font-weight:400;color:#111;">005</div>
<div class="t" style="left:336.4px;top:389.00px;font-size:12.688865972522537px;font-weight:400;color:#111;">Dodavatel - školení 7</div>
<div class="t" style="left:686.1px;top:388.00px;font-size:13.215803336259878px;font-weight:400;color:#111;">12345678</div>
<div class="t" style="left:785.6px;top:389.00px;font-size:12.851738970667704px;font-weight:400;color:#111;">22. 5. 2025 8:44</div>
<div class="t" style="left:935.9px;top:389.00px;font-size:12.641975308641975px;font-weight:400;color:#111;">Otevřeno</div>
<svg style="position:absolute;left:1144.5px;top:389px;" width="9" height="9" viewBox="0 0 9 9"><path d="M1 1 L8 8 M8 1 L1 8" stroke="#d2232a" stroke-width="2"/></svg>
<svg style="position:absolute;left:1284.5px;top:389px;" width="9" height="9" viewBox="0 0 9 9"><path d="M1 1 L8 8 M8 1 L1 8" stroke="#d2232a" stroke-width="2"/></svg>
<div style="position:absolute;left:1344px;top:219px;width:60px;height:187px;background:linear-gradient(to right, rgba(0,0,0,0) 0%, rgba(0,0,0,0.015) 40%, rgba(0,0,0,0.09) 100%)"></div>
<div style="position:absolute;left:182px;top:407px;width:1222px;height:12px;background:#f5f5f5"></div>
<div style="position:absolute;left:184px;top:408.5px;width:1097px;height:9px;background:#c3c3c3;border-radius:5px"></div>
<div style="position:absolute;left:164px;top:121px;width:1258px;height:42px;background:#f2f2f2"></div>
<svg style="position:absolute;left:893px;top:134px;overflow:visible;filter:drop-shadow(3px -2px 1.2px rgba(0,0,0,0.2))" width="243" height="29"><polygon points="0,0 213,0 239,29 0,29" fill="#1f72b5"/></svg>
<div class="t" style="left:912.3px;top:143.00px;font-size:13.1444261394838px;font-weight:700;color:#fff;">Výsledek zadávacího postupu</div>
<svg style="position:absolute;left:787px;top:134px;overflow:visible;filter:drop-shadow(3px -2px 1.2px rgba(0,0,0,0.2))" width="127" height="29"><polygon points="0,0 94,0 123,29 0,29" fill="#1f72b5"/></svg>
<div class="t" style="left:806.5px;top:143.00px;font-size:13.045424302909334px;font-weight:700;color:#fff;">Hodnocení</div>
<svg style="position:absolute;left:448px;top:134px;overflow:visible;filter:drop-shadow(3px -2px 1.2px rgba(0,0,0,0.2))" width="181" height="29"><polygon points="0,0 148,0 177,29 0,29" fill="#1f72b5"/></svg>
<div class="t" style="left:466.8px;top:143.00px;font-size:13.166994966075729px;font-weight:700;color:#fff;">Zadávací podmínky</div>
<svg style="position:absolute;left:294px;top:134px;overflow:visible;filter:drop-shadow(3px -2px 1.2px rgba(0,0,0,0.2))" width="175" height="29"><polygon points="0,0 142,0 171,29 0,29" fill="#1f72b5"/></svg>
<div class="t" style="left:313.6px;top:143.00px;font-size:13.03974107284979px;font-weight:700;color:#fff;">Kritéria hodnocení</div>
<svg style="position:absolute;left:164px;top:134px;overflow:visible;filter:drop-shadow(3px -2px 1.2px rgba(0,0,0,0.2))" width="151" height="29"><polygon points="0,0 118,0 147,29 0,29" fill="#1f72b5"/></svg>
<div class="t" style="left:183.0px;top:143.00px;font-size:13.215466630676834px;font-weight:700;color:#fff;">Základní údaje</div>
<svg style="position:absolute;left:608px;top:132px;overflow:visible;filter:drop-shadow(1px -0.5px 1px rgba(0,0,0,0.12))" width="202" height="31"><polygon points="0,0 167,0 198,31 0,31" fill="#fff"/></svg>
<div class="t" style="left:628.5px;top:141.00px;font-size:14.031520081342146px;font-weight:700;color:#111;">Podání účastníků ZP</div>
<div style="position:absolute;left:608px;top:160px;width:194px;height:6px;background:#fff"></div>
<div style="position:absolute;left:164px;top:452px;width:1258px;height:398px;background:#fff;box-shadow:2px 0 4px rgba(0,0,0,0.09)"></div>
<div class="t" style="left:176px;top:469.00px;font-size:17.4px;font-weight:700;color:#333;letter-spacing:-0.387px;">Předběžné nabídky</div>
<div style="position:absolute;left:164px;top:493px;width:1258px;height:3px;background:#1f72b5"></div>
<div style="position:absolute;left:551px;top:514px;width:292px;height:26px;box-sizing:border-box;border:1.5px solid #ea1d2c"></div>
<svg style="position:absolute;left:557px;top:520px;" width="7" height="7" viewBox="0 0 7 7"><path d="M3.5 0.3 V6.5 M0.6 1.6 L6.4 5.2 M6.4 1.6 L0.6 5.2" stroke="#d4202e" stroke-width="1.2"/></svg>
<div class="t" style="left:565.6px;top:518.00px;font-size:13.02011914128358px;font-weight:400;color:#555;">Lhůta:</div>
<div style="position:absolute;left:612px;top:516px;width:224px;height:21px;box-sizing:border-box;background:#fdf7c2;border:1px solid #e6dfa6;border-radius:4px"></div>
<div class="t" style="left:617.2px;top:521.00px;font-size:13.088138874145306px;font-weight:700;color:#111;">22. 5. 2025</div>
<div style="position:absolute;left:715px;top:518px;width:18px;height:17px;background:#c6dbf3;border-radius:4px"></div>
<svg style="position:absolute;left:718px;top:520px;" width="12" height="12" viewBox="0 0 12 12"><rect x="0.6" y="2" width="10.8" height="9.4" rx="0.8" fill="none" stroke="#2a5db0" stroke-width="1.1"/><path d="M0.6 4.6 H11.4" stroke="#2a5db0" stroke-width="1.1"/><path d="M3.2 0.5 V3 M8.8 0.5 V3" stroke="#2a5db0" stroke-width="1.1"/></svg>
<div class="t" style="left:739px;top:522.00px;font-size:12.706946056570347px;font-weight:700;color:#111;">18:30</div>
<div style="position:absolute;left:846px;top:516px;width:204px;height:20px;box-sizing:border-box;border:1px solid #dcdcdc;border-radius:6px;box-shadow:0 1px 2px rgba(0,0,0,0.12)"></div>
<div class="t" style="left:912.7px;top:521.00px;font-size:12.93736869002328px;font-weight:400;color:#1f6eb0;">Výpočet lhůt</div>
<div class="t" style="left:475.8px;top:560.00px;font-size:12.544536770987031px;font-weight:400;color:#555;">Datum a čas otevírání:</div>
<div style="position:absolute;left:612px;top:557px;width:438px;height:21px;box-sizing:border-box;border:1px solid #dcdcdc;border-radius:4px;box-shadow:inset 0 1px 1px rgba(0,0,0,0.05)"></div>
<div style="position:absolute;left:822px;top:559px;width:18px;height:17px;background:#c6dbf3;border-radius:4px"></div>
<svg style="position:absolute;left:825px;top:561px;" width="12" height="12" viewBox="0 0 12 12"><rect x="0.6" y="2" width="10.8" height="9.4" rx="0.8" fill="none" stroke="#2a5db0" stroke-width="1.1"/><path d="M0.6 4.6 H11.4" stroke="#2a5db0" stroke-width="1.1"/><path d="M3.2 0.5 V3 M8.8 0.5 V3" stroke="#2a5db0" stroke-width="1.1"/></svg>
<div style="position:absolute;left:613px;top:599px;width:438px;height:19px;box-sizing:border-box;border:1.5px solid #ea1d2c;box-shadow:0 1px 2px rgba(0,40,80,0.12)"></div>
<div class="t" style="left:702.7px;top:603.00px;font-size:12.40414757656137px;font-weight:400;color:#1f6eb0;">Odeslání výzvy k podání předběžných nabídek</div>
<div class="t" style="left:179.4px;top:643.00px;font-size:14.605441178867752px;font-weight:700;color:#333;">Přehled podaných předběžných nabídek</div>
<div style="position:absolute;left:179px;top:664px;width:1228px;height:166px;box-sizing:border-box;border:3px solid #dfe0e3;border-radius:9px;background:#fff"></div>
<svg style="position:absolute;left:190px;top:678.5px;" width="17" height="17" viewBox="0 0 17 17"><path d="M4 3 H1.8 Q0.8 3 0.8 4 V14.9 Q0.8 15.9 1.8 15.9 H6.3" fill="none" stroke="#1f6eb0" stroke-width="1.2"/><path d="M9 3 H11.9 Q12.9 3 12.9 4 V6.3" fill="none" stroke="#1f6eb0" stroke-width="1.2"/><path d="M4 3 Q4.3 0.7 6.45 0.7 Q8.6 0.7 9 3" fill="none" stroke="#1f6eb0" stroke-width="1.2"/><circle cx="6.45" cy="2.4" r="0.6" fill="#1f6eb0"/><path d="M3 7 H6 M3 9.5 H4.8 M3 12 H4.8" stroke="#1f6eb0" stroke-width="1.1"/><polygon points="11.70,6.60 13.35,8.34 15.68,8.90 15.00,11.20 15.68,13.50 13.35,14.06 11.70,15.80 10.05,14.06 7.72,13.50 8.40,11.20 7.72,8.90 10.05,8.34" fill="#fff" stroke="#1f6eb0" stroke-width="1.1" stroke-linejoin="round"/><circle cx="11.7" cy="11.2" r="1.1" fill="#1f6eb0"/></svg>
<div class="t" style="left:210.4px;top:681.00px;font-size:12.515085316171696px;font-weight:400;color:#1f6eb0;">Evidovat předběžnou nabídku</div>
<div style="position:absolute;left:382px;top:678px;width:1.25px;height:17px;background:#1f6eb0"></div>
<svg style="position:absolute;left:391.3px;top:678.5px;" width="17" height="17" viewBox="0 0 17 17"><path d="M4 3 H1.8 Q0.8 3 0.8 4 V14.9 Q0.8 15.9 1.8 15.9 H6.3" fill="none" stroke="#1f6eb0" stroke-width="1.2"/><path d="M9 3 H11.9 Q12.9 3 12.9 4 V6.3" fill="none" stroke="#1f6eb0" stroke-width="1.2"/><path d="M4 3 Q4.3 0.7 6.45 0.7 Q8.6 0.7 9 3" fill="none" stroke="#1f6eb0" stroke-width="1.2"/><circle cx="6.45" cy="2.4" r="0.6" fill="#1f6eb0"/><path d="M3 7 H6 M3 9.5 H4.8 M3 12 H4.8" stroke="#1f6eb0" stroke-width="1.1"/><circle cx="11.7" cy="11.6" r="4.3" fill="#fff" stroke="#1f6eb0" stroke-width="1.2"/><path d="M9.3 11.6 H14 M12.2 9.8 L14 11.6 L12.2 13.4" fill="none" stroke="#1f6eb0" stroke-width="1.1"/></svg>
<div class="t" style="left:411.4px;top:681.00px;font-size:12.736524141050285px;font-weight:400;color:#1f6eb0;">Zobrazit počet podání</div>
<div style="position:absolute;left:541px;top:678px;width:1.25px;height:17px;background:#1f6eb0"></div>
<svg style="position:absolute;left:550px;top:679px;" width="16" height="16" viewBox="0 0 16 16"><path d="M3.8 5 V1.5 Q3.8 0.8 4.5 0.8 H11.5 Q12.2 0.8 12.2 1.5 V5" fill="none" stroke="#1f6eb0" stroke-width="1.2"/><path d="M3.5 12 H1.8 Q0.8 12 0.8 11 V6 Q0.8 5 1.8 5 H14.2 Q15.2 5 15.2 6 V11 Q15.2 12 14.2 12 H12.5" fill="none" stroke="#1f6eb0" stroke-width="1.2"/><rect x="3.8" y="9" width="8.4" height="6.3" rx="0.6" fill="none" stroke="#1f6eb0" stroke-width="1.2"/><path d="M5.5 11 H10.5 M5.5 13 H9" stroke="#1f6eb0" stroke-width="0.9"/><path d="M2.2 6.8 H3.5" stroke="#1f6eb0" stroke-width="0.9"/></svg>
<svg style="position:absolute;left:570.5px;top:683px;" width="8" height="7" viewBox="0 0 8 7"><path d="M0.6 0.6 H7.4 L4 6.2 Z" fill="none" stroke="#1f6eb0" stroke-width="1.05" stroke-linejoin="round"/></svg>
<div style="position:absolute;left:589px;top:678px;width:1.25px;height:17px;background:#1f6eb0"></div>
<svg style="position:absolute;left:599.5px;top:678px;" width="15" height="16" viewBox="0 0 15 16"><path d="M3.5 5 H1 V15 H14 V5 H11.5" fill="none" stroke="#1f6eb0" stroke-width="1.2" stroke-linejoin="round"/><path d="M7.5 11 V1 M4.5 4 L7.5 1 L10.5 4" fill="none" stroke="#1f6eb0" stroke-width="1.2"/></svg>
<svg style="position:absolute;left:617.5px;top:683px;" width="8" height="7" viewBox="0 0 8 7"><path d="M0.6 0.6 H7.4 L4 6.2 Z" fill="none" stroke="#1f6eb0" stroke-width="1.05" stroke-linejoin="round"/></svg>
<div style="position:absolute;left:636px;top:678px;width:1.25px;height:17px;background:#1f6eb0"></div>
<svg style="position:absolute;left:1322px;top:678.5px;" width="17" height="17" viewBox="0 0 17 17"><path d="M1 1 H16 Q16.5 5 13 6.8 Q10.5 8 10 9 V14.5 L7.5 16 V9 Q7 8 4.5 6.8 Q1 5 1 1 Z" fill="none" stroke="#1f6eb0" stroke-width="1.1" stroke-linejoin="round"/></svg>
<div style="position:absolute;left:1346px;top:678px;width:1.25px;height:17px;background:#1f6eb0"></div>
<svg style="position:absolute;left:1359.5px;top:684px;" width="8" height="7" viewBox="0 0 8 7"><path d="M0.6 0.6 H7.4 L4 6.2 Z" fill="none" stroke="#1f6eb0" stroke-width="1.05" stroke-linejoin="round"/></svg>
<div class="t" style="left:1375.2px;top:683.00px;font-size:12.476199111433493px;font-weight:400;color:#1f6eb0;">Vše</div>
<div style="position:absolute;left:1403px;top:678px;width:1.25px;height:17px;background:#1f6eb0"></div>
<div style="position:absolute;left:182px;top:706px;width:1222px;height:34px;background:#f2f2f2;border-top:1px solid #e4e4e4;border-bottom:1.5px solid #d9d9d9;box-sizing:border-box"></div>
<svg style="position:absolute;left:197.5px;top:715px;" width="17" height="17" viewBox="0 0 17 17"><rect x="0.65" y="0.65" width="15" height="15" rx="1" fill="none" stroke="#555" stroke-width="1.3"/><path d="M3 5.5 H13 M3 10.5 H13" stroke="#555" stroke-width="1.1"/><circle cx="10.5" cy="5.5" r="1.6" fill="#f0f0f0" stroke="#555" stroke-width="1.1"/><circle cx="6.5" cy="10.5" r="1.6" fill="#f0f0f0" stroke="#555" stroke-width="1.1"/></svg>
<div style="position:absolute;left:229px;top:706px;width:1px;height:32px;background:#dadada"></div>
<div style="position:absolute;left:309px;top:706px;width:1px;height:32px;background:#dadada"></div>
<div style="position:absolute;left:659px;top:706px;width:1px;height:32px;background:#dadada"></div>
<div style="position:absolute;left:760px;top:706px;width:1px;height:32px;background:#dadada"></div>
<div style="position:absolute;left:899px;top:706px;width:1px;height:32px;background:#dadada"></div>
<div style="position:absolute;left:1079.5px;top:706px;width:1px;height:32px;background:#dadada"></div>
<div style="position:absolute;left:1209.5px;top:706px;width:1px;height:32px;background:#dadada"></div>
<div class="t" style="left:237.8px;top:719.00px;font-size:11.943503547005816px;font-weight:700;color:#111;">Číslo</div>
<svg style="position:absolute;left:271.5px;top:716px;" width="14" height="13" viewBox="0 0 14 13"><path d="M7 12.5 V1.5 M1.5 7 L7 1.5 L12.5 7" fill="none" stroke="#222" stroke-width="1.3"/></svg>
<svg style="position:absolute;left:292px;top:720px;" width="8" height="7" viewBox="0 0 8 7"><path d="M0.6 0.6 H7.4 L4 6.2 Z" fill="none" stroke="#555" stroke-width="1.0" stroke-linejoin="round"/></svg>
<div class="t" style="left:318px;top:718.00px;font-size:12.55391821996682px;font-weight:400;color:#666;">Název dodavatele</div>
<svg style="position:absolute;left:642.5px;top:720px;" width="8" height="7" viewBox="0 0 8 7"><path d="M0.6 0.6 H7.4 L4 6.2 Z" fill="none" stroke="#555" stroke-width="1.0" stroke-linejoin="round"/></svg>
<div class="t" style="left:668px;top:718.00px;font-size:12.7px;font-weight:400;color:#666;">IČO</div>
<svg style="position:absolute;left:742px;top:720px;" width="8" height="7" viewBox="0 0 8 7"><path d="M0.6 0.6 H7.4 L4 6.2 Z" fill="none" stroke="#555" stroke-width="1.0" stroke-linejoin="round"/></svg>
<div class="t" style="left:767.8px;top:718.00px;font-size:12.671375982489304px;font-weight:400;color:#666;">Datum podání</div>
<svg style="position:absolute;left:882px;top:720px;" width="8" height="7" viewBox="0 0 8 7"><path d="M0.6 0.6 H7.4 L4 6.2 Z" fill="none" stroke="#555" stroke-width="1.0" stroke-linejoin="round"/></svg>
<div class="t" style="left:907.8px;top:718.00px;font-size:12.7px;font-weight:400;color:#666;">Stav</div>
<svg style="position:absolute;left:1062.5px;top:720px;" width="8" height="7" viewBox="0 0 8 7"><path d="M0.6 0.6 H7.4 L4 6.2 Z" fill="none" stroke="#555" stroke-width="1.0" stroke-linejoin="round"/></svg>
<div class="t" style="left:1088.2px;top:718.00px;font-size:12.588858619876016px;font-weight:400;color:#666;">Podaná po lhůtě</div>
<svg style="position:absolute;left:1192px;top:720px;" width="8" height="7" viewBox="0 0 8 7"><path d="M0.6 0.6 H7.4 L4 6.2 Z" fill="none" stroke="#555" stroke-width="1.0" stroke-linejoin="round"/></svg>
<div class="t" style="left:1217.6px;top:718.00px;font-size:12.830021684294376px;font-weight:400;color:#666;">Listinná podoba</div>
<svg style="position:absolute;left:1386.5px;top:720px;" width="8" height="7" viewBox="0 0 8 7"><path d="M0.6 0.6 H7.4 L4 6.2 Z" fill="none" stroke="#555" stroke-width="1.0" stroke-linejoin="round"/></svg>
<svg style="position:absolute;left:818.5px;top:768.5px;" width="25" height="11" viewBox="0 0 25 11"><path d="M1.8 0.8 H6 Q8.5 4.5 12.5 4.5 Q16.5 4.5 19 0.8 H23.2 Q24.2 0.8 24.2 1.8 V9.2 Q24.2 10.2 23.2 10.2 H1.8 Q0.8 10.2 0.8 9.2 V1.8 Q0.8 0.8 1.8 0.8 Z" fill="none" stroke="#666" stroke-width="1.3"/></svg>
<div class="t" style="left:631px;top:793.00px;font-size:12.887849762425523px;font-weight:400;color:#666;">Seznam s podáními bude zpřístupněn až po uplynutí lhůty pro podání.</div>
</body></html>
